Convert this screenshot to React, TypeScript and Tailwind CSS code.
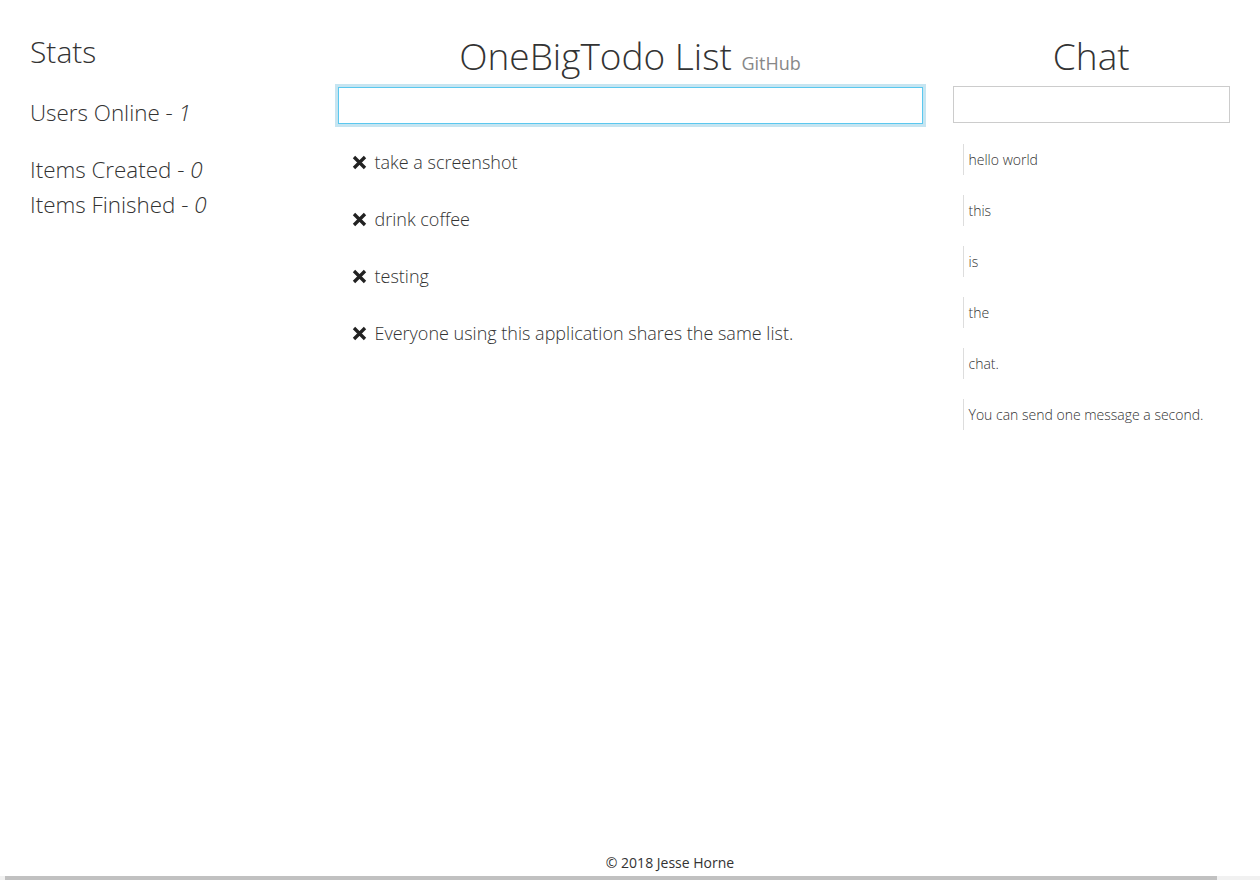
import React from 'react';

const font = "font-['Open_Sans',sans-serif]";

const todos = [
  'take a screenshot',
  'drink coffee',
  'testing',
  'Everyone using this application shares the same list.',
];

const messages = ['hello world', 'this', 'is', 'the', 'chat.', 'You can send one message a second.'];

const RemoveIcon = () => (
  <svg width="15" height="15" viewBox="0 0 15 15" className="shrink-0">
    <path d="M2 2 L13 13 M13 2 L2 13" stroke="#222" strokeWidth="3.3" strokeLinecap="butt" />
  </svg>
);

const App = () => {
  return (
    <div className={`${font} min-h-[880px] flex flex-col bg-white text-[#333]`}>
      <main className="flex-1 px-[15px] grid grid-cols-[1fr_2fr_1fr]">
        {/* Stats */}
        <div className="px-[15px] pt-[35px]">
          <h2 className="text-[30px] leading-[33px] font-light">Stats</h2>
          <div className="mt-[27px] text-[22.4px] leading-[35px] font-light">
            Users Online - <i>1</i>
          </div>
          <div className="mt-[22px] text-[22.4px] leading-[35px] font-light">
            <div>
              Items Created - <i>0</i>
            </div>
            <div>
              Items Finished - <i>0</i>
            </div>
          </div>
        </div>

        {/* Todo list */}
        <div className="px-[15px] pt-[36px]">
          <h1 className="text-center font-light text-[37px] leading-[40px]">
            OneBigTodo List{' '}
            <span className="text-[18px] leading-none text-[#888] font-normal">GitHub</span>
          </h1>
          <div className="mt-[11px] h-[37px] border border-[#5bc8ef] shadow-[0_0_0_3px_#c6e5f1]" />
          <ul className="mt-[10px]">
            {todos.map((t) => (
              <li key={t} className="h-[57px] flex items-center gap-[8px] pl-[14px] text-[18px] font-light">
                <RemoveIcon />
                <span>{t}</span>
              </li>
            ))}
          </ul>
        </div>

        {/* Chat */}
        <div className="px-[15px] pt-[36px]">
          <h1 className="text-center font-light text-[37px] leading-[40px]">Chat</h1>
          <div className="mt-[10px] h-[37px] border border-[#ccc]" />
          <div className="mt-[21px] flex flex-col gap-[20px] pl-[10px]">
            {messages.map((m) => (
              <div key={m} className="h-[31px] border-l border-[#ddd] pl-[5px] flex items-center text-[14px] font-light">
                {m}
              </div>
            ))}
          </div>
        </div>
      </main>

      <footer className="pl-[80px] text-center text-[14px] leading-[20px] pb-[3px]">© 2018 Jesse Horne</footer>
      <div className="h-[4px] bg-[#f1f1f1]">
        <div className="ml-[5px] w-[1212px] h-full bg-[#c1c1c1]" />
      </div>
    </div>
  );
};

export default App;
